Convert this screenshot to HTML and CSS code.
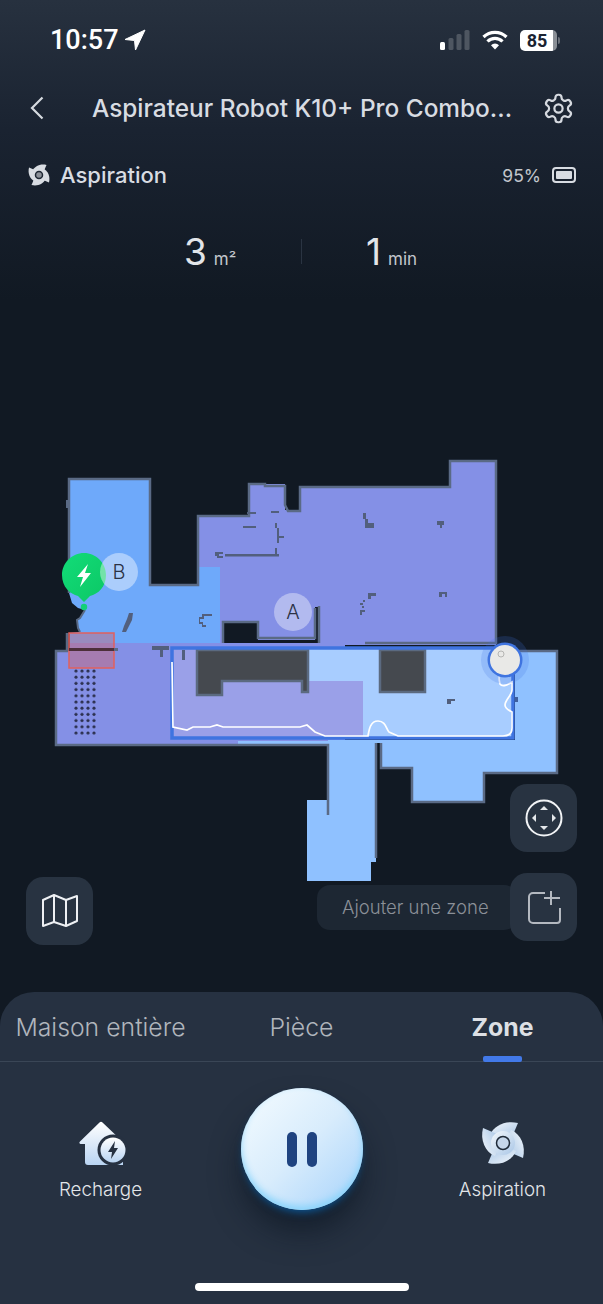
FILE: index.html
```html
<!DOCTYPE html>
<html lang="fr">
<head>
    <meta charset="UTF-8">
    <meta name="viewport" content="width=device-width, initial-scale=1.0">
    <title>Aspirateur Robot</title>
    <link rel="stylesheet" href="styles.css">
</head>
<body>
    <div class="phone">
        <div class="status-bar">
            <div class="clock">
                <span>10:57</span>
                <svg width="22" height="22" viewBox="0 0 22 22"><path d="M21 1 1 10.5l9.5 1 1 9.5z" fill="#fff" stroke="#fff" stroke-linejoin="round"/></svg>
            </div>
            <div class="status-icons">
                <svg width="30" height="20" viewBox="0 0 30 20">
                    <rect x="0" y="12" width="5" height="8" rx="1.5" fill="#fff"/>
                    <rect x="8.500" y="8" width="5" height="12" rx="1.5" fill="#4e5661"/>
                    <rect x="16.500" y="4" width="5" height="16" rx="1.5" fill="#4e5661"/>
                    <rect x="24.500" y="0" width="5" height="20" rx="1.5" fill="#4e5661"/>
                </svg>
                <svg width="26" height="20" viewBox="0 0 26 20">
                    <path d="M1.500 7a16.500 16.500 0 0 1 23 0" fill="none" stroke="#fff" stroke-width="3.200"/>
                    <path d="M5.500 11.500a10.500 10.500 0 0 1 15 0" fill="none" stroke="#fff" stroke-width="3.200"/>
                    <path d="M9 15.200a5.500 5.500 0 0 1 8 0L13 19.500z" fill="#fff"/>
                </svg>
                <div class="sys-battery"><span>85</span><i></i></div>
            </div>
        </div>

        <div class="nav-bar">
            <svg class="back" width="14" height="24" viewBox="0 0 14 24"><path d="M12.500 1.500 2 12l10.500 10.500" fill="none" stroke="#d6dae0" stroke-width="2.200"/></svg>
            <h1 class="title">Aspirateur Robot K10+ Pro Combo...</h1>
            <svg class="gear" width="33" height="33" viewBox="0 0 24 24" fill="none" stroke="#d6dae0" stroke-width="1.600">
                <path d="M12.220 2h-.44a2 2 0 0 0-2 2v.18a2 2 0 0 1-1 1.730l-.43.25a2 2 0 0 1-2 0l-.15-.08a2 2 0 0 0-2.730.73l-.22.38a2 2 0 0 0 .73 2.730l.15.1a2 2 0 0 1 1 1.720v.51a2 2 0 0 1-1 1.740l-.15.09a2 2 0 0 0-.73 2.730l.22.38a2 2 0 0 0 2.730.73l.15-.08a2 2 0 0 1 2 0l.43.25a2 2 0 0 1 1 1.730V20a2 2 0 0 0 2 2h.44a2 2 0 0 0 2-2v-.18a2 2 0 0 1 1-1.730l.43-.25a2 2 0 0 1 2 0l.15.08a2 2 0 0 0 2.730-.73l.22-.39a2 2 0 0 0-.73-2.730l-.15-.08a2 2 0 0 1-1-1.740v-.5a2 2 0 0 1 1-1.740l.15-.09a2 2 0 0 0 .73-2.730l-.22-.38a2 2 0 0 0-2.730-.73l-.15.08a2 2 0 0 1-2 0l-.43-.25a2 2 0 0 1-1-1.730V4a2 2 0 0 0-2-2z"/>
                <circle cx="12" cy="12" r="3"/>
            </svg>
        </div>

        <div class="info-row">
            <div class="mode">
                <svg width="24" height="24" viewBox="-24 -24 48 48">
                    <defs>
                        <path id="blade" d="M-13-8C-9-18 3-23 15-20L9-6H-9z"/>
                    </defs>
                    <g fill="#d8dce2">
                        <use href="#blade"/>
                        <use href="#blade" transform="rotate(90)"/>
                        <use href="#blade" transform="rotate(180)"/>
                        <use href="#blade" transform="rotate(270)"/>
                        <circle r="12"/>
                    </g>
                    <circle r="7" fill="#8b9098" stroke="#1d2633" stroke-width="3"/>
                </svg>
                <span>Aspiration</span>
            </div>
            <div class="charge">
                <span>95%</span>
                <div class="robot-battery"><i></i></div>
            </div>
        </div>

        <div class="stats">
            <div class="stat stat-area"><b>3</b><span>m²</span></div>
            <div class="stat-sep"></div>
            <div class="stat stat-time"><b>1</b><span>min</span></div>
        </div>

        <div class="map">
            <svg class="floor" width="603" height="702" viewBox="0 290 603 702">
                <defs>
                    <pattern id="dots" x="74" y="669" width="6" height="6.200" patternUnits="userSpaceOnUse">
                        <circle cx="2" cy="2" r="1.600" fill="#2c3150"/>
                    </pattern>
                    <linearGradient id="pin" x1="0" y1="0" x2="1" y2="1">
                        <stop offset="0" stop-color="#12dc78"/>
                        <stop offset="1" stop-color="#0cc765"/>
                    </linearGradient>
                </defs>

                <!-- room fills -->
                <path fill="#8490e6" d="M199 516H249V484H285V510H300V487H450V461H496V645H199z"/>
                <path fill="#8490e6" d="M56 651H70V643H345V745H56z"/>
                <path fill="#8fc1ff" d="M238 741H328V745H238zM515 651H557V773H484V802H412V768H381V743H376V847L376 862H371V881H307V800H328V740H515z"/>
                <path fill="#6ea9fa" d="M69 479H150V585H198V567H220V643H70V633L80 632 78 628 77 620 80 618 85 610 78 608 72 603 69 593z"/>

                <!-- black holes between rooms -->
                <path fill="#111923" d="M223 622H258V640H315V607H318V643H223z"/>

                <!-- selected zone -->
                <rect x="172" y="648" width="342" height="90" fill="#a8cdff"/>
                <path fill="#9aa0e8" d="M172 648H308V681H363V738H172z"/>
                <path fill="#45494f" stroke="#5b6a80" stroke-width="2.500" d="M197 650H308V692H302V681H222V695H197z"/>
                <path fill="#45494f" stroke="#5b6a80" stroke-width="2.500" d="M380 650H425V692H380z"/>

                <!-- walls -->
                <g fill="none" stroke="#5a6a85" stroke-width="2.500">
                    <path d="M69 593V479H150V585H198V516H249V484H265V486H285V505L288 511H300V487H450V461H496V643H365"/>
                    <path d="M223 643V622H258V638H315V608"/>
                    <path d="M319 606V643"/>
                    <path d="M67 633V651H56V745H328V815"/>
                    <path d="M515 651H557V773H484V802H412V768H381V743"/>
                    <path d="M376 743V858"/>
                </g>
                <path fill="none" stroke="#5a6a85" stroke-width="2" d="M85 610 80 618 77 620 78 628 80 632"/>
                <rect x="66" y="500" width="4" height="8" fill="#5a6a85"/>

                <!-- furniture and obstacle marks -->
                <g fill="#525f7d">
                    <rect x="243" y="526" width="13" height="2"/>
                    <rect x="247" y="512" width="9" height="2"/>
                    <rect x="271" y="511" width="8" height="2"/>
                    <rect x="275" y="523" width="2" height="5"/>
                    <rect x="277" y="528" width="2" height="15"/>
                    <rect x="277" y="536" width="7" height="2"/>
                    <rect x="275" y="548" width="2" height="7"/>
                    <rect x="225" y="554" width="54" height="2.500"/>
                    <path d="M215 552H223V554H219V556H223V558H217V556H215z"/>
                    <path d="M363 513H366V519H368V523H374V528H365V519H363z"/>
                    <path d="M437 521H444V525H442V528H440V525H437z"/>
                    <path d="M368 593H376V596H371V599H368z"/>
                    <rect x="363" y="600" width="2" height="2"/>
                    <rect x="360" y="603" width="3" height="2"/>
                    <rect x="362" y="606" width="2" height="2"/>
                    <path d="M360 610H365V612H362V615H360z"/>
                    <path d="M439 592H447V597H445V594H442V597H439z"/>
                    <path d="M447 699H455V701H451V704H447z"/>
                    <path d="M129 613H133L132 620 128 628 126 632H122L124 626 127 619z"/>
                    <path d="M199 617H202V614H212V616H204V619H200V622H203V625H206V627H202V624H199z"/>
                    <path d="M152 646H169V650H163V657H160V650H152z"/>
                    <path d="M182 650H185V660H182z"/>
                </g>

                <rect x="74" y="669" width="24" height="66" fill="url(#dots)"/>
                <rect x="365" y="642" width="131" height="2" fill="#5a6a85"/>

                <!-- zone outline and cleaning trail -->
                <path fill="none" stroke="#3f74e0" stroke-width="3.500" d="M172 648H513V738H172z"/>
                <rect x="515" y="697" width="3" height="5" fill="#3f5f9e"/>
                <path fill="none" stroke="#fff" stroke-width="1.700" d="M172 662 173 727 187 730 193 727 210 727 217 725 223 727H300L307 725 315 732 325 736H368C369 730 370 721 378 721 386 721 386 729 389 732L398 736H503C510 736 512 733 512 728V712C508 710 505 708 505 705 505 700 512 695 512 690V682C506 686 502 687 500 684 499 681 499 678 499 675"/>

                <!-- virtual zone box on the left -->
                <rect x="69" y="633" width="45" height="35" fill="rgba(224,92,92,.38)" stroke="#e0605e" stroke-width="1.500"/>
                <rect x="69" y="648" width="45" height="3" fill="#4d2f3a"/>
                <rect x="114" y="648" width="4" height="3" fill="#5a6a85"/>

                <!-- robot -->
                <circle cx="505" cy="660" r="24" fill="#3f74e0" fill-opacity=".2"/>
                <circle cx="505" cy="660" r="17.500" fill="#3f74e0"/>
                <circle cx="505" cy="660" r="15" fill="#e9e9e7"/>
                <circle cx="501" cy="654" r="3" fill="none" stroke="#b5b5b3" stroke-width="1"/>

                <!-- dock pin and room labels -->
                <circle cx="293" cy="612" r="19" fill="#fff" fill-opacity=".38"/>
                <text class="room-label" x="293" y="619">A</text>
                <circle cx="84" cy="607" r="3.200" fill="#12d077"/>
                <path fill="url(#pin)" d="M84 553C96 553 106 563 106 575 106 587 98 594 90 596L84 602 78 596C70 594 62 587 62 575 62 563 72 553 84 553z"/>
                <path fill="#fff" d="M88 564 77 577H83L80 587 91 573H85z"/>
                <circle cx="119" cy="572" r="19" fill="#fff" fill-opacity=".42"/>
                <text class="room-label" x="119" y="579">B</text>
            </svg>

            <div class="map-btn btn-view">
                <svg width="36" height="34" viewBox="0 0 36 34" fill="none" stroke="#eef0f3" stroke-width="2" stroke-linejoin="round">
                    <path d="M1 6 12 1 24 6 35 2V27L24 32 12 28 1 32z"/>
                    <path d="M12 1V28M24 6V32"/>
                </svg>
            </div>
            <div class="map-btn btn-center">
                <svg width="38" height="38" viewBox="0 0 38 38">
                    <circle cx="19" cy="19" r="17.500" fill="none" stroke="#f2f4f6" stroke-width="2"/>
                    <path fill="#e4e7ea" d="M19 7l4 4h-8zM19 31l4-4h-8zM7 19l4-4v8zM31 19l-4-4v8z"/>
                </svg>
            </div>
            <div class="add-zone">
                <div class="add-label">Ajouter une zone</div>
                <div class="map-btn btn-add">
                    <svg width="34" height="34" viewBox="0 0 34 34" fill="none" stroke="#b4b9c0" stroke-width="2">
                        <path d="M18 3H6a4 4 0 0 0-4 4v22a4 4 0 0 0 4 4h24a3 3 0 0 0 3-3V18"/>
                        <path d="M24 1V15M17 8H33"/>
                    </svg>
                </div>
            </div>
        </div>

        <div class="sheet">
            <div class="tabs">
                <div class="tab">Maison entière</div>
                <div class="tab">Pièce</div>
                <div class="tab active">Zone</div>
            </div>
            <div class="actions">
                <div class="action">
                    <svg width="56" height="48" viewBox="0 0 56 48">
                        <defs>
                            <linearGradient id="house" x1="0" y1="0" x2="0" y2="1">
                                <stop offset="0" stop-color="#ffffff"/>
                                <stop offset="1" stop-color="#b9d4f2"/>
                            </linearGradient>
                        </defs>
                        <path fill="url(#house)" d="M26.500 3.500Q28 2 29.500 3.500L50 23V46H15A3 3 0 0 1 12 43V25H7.500Q5.500 24 7 22.500z"/>
                        <circle cx="40" cy="31" r="15.500" fill="#263141"/>
                        <circle cx="40" cy="31" r="12.500" fill="url(#house)"/>
                        <path fill="#263141" d="M42 22 35 33H39L38 40 45 29H41z"/>
                    </svg>
                    <span>Recharge</span>
                </div>
                <div class="pause-btn">
                    <i></i><i></i>
                </div>
                <div class="action">
                    <svg width="48" height="48" viewBox="-24 -24 48 48">
                        <defs>
                            <linearGradient id="fan" x1="0" y1="0" x2="1" y2="1">
                                <stop offset="0" stop-color="#f4f8fc"/>
                                <stop offset="1" stop-color="#a9c6e6"/>
                            </linearGradient>
                        </defs>
                        <g fill="url(#fan)">
                            <use href="#blade"/>
                            <use href="#blade" transform="rotate(90)"/>
                            <use href="#blade" transform="rotate(180)"/>
                            <use href="#blade" transform="rotate(270)"/>
                            <circle r="12"/>
                        </g>
                        <circle r="6.500" fill="#c5d6ea" stroke="#1f2a38" stroke-width="1.500"/>
                    </svg>
                    <span>Aspiration</span>
                </div>
            </div>
            <div class="home-bar"></div>
        </div>
    </div>
</body>
</html>
```

FILE: styles.css
```css
* {
    box-sizing: border-box;
}
body {
    margin: 0;
    font-family: 'Inter', 'Liberation Sans', sans-serif;
    background-color: #111923;
    color: #d8dce2;
}
.phone {
    width: 603px;
    height: 1304px;
    display: flex;
    flex-direction: column;
    overflow: hidden;
    background: linear-gradient(180deg, #27313f 0, #1a2331 130px, #111923 300px);
}

/* status bar */
.status-bar {
    height: 80px;
    flex-shrink: 0;
    display: flex;
    justify-content: space-between;
    align-items: center;
    padding: 0 43px 0 50px;
}
.clock {
    display: flex;
    align-items: center;
    gap: 5px;
    font-family: 'Roboto', sans-serif;
    font-size: 27px;
    font-weight: 500;
    color: #fff;
}
.status-icons {
    display: flex;
    align-items: center;
    gap: 12px;
}
.sys-battery {
    display: flex;
    align-items: center;
    gap: 1px;
    font-family: 'Roboto', sans-serif;
}
.sys-battery span {
    width: 37px;
    height: 21px;
    padding-right: 3px;
    border-radius: 5px;
    background: linear-gradient(90deg, #fff 88%, #8a8f96 88%);
    color: #1a2331;
    font-size: 18px;
    font-weight: 700;
    line-height: 21px;
    text-align: center;
}
.sys-battery i {
    display: block;
    width: 2px;
    height: 7px;
    border-radius: 0 2px 2px 0;
    background-color: #6b717a;
}

/* header */
.nav-bar {
    height: 56px;
    flex-shrink: 0;
    display: flex;
    align-items: center;
    padding: 0 30px;
}
.back {
    flex-shrink: 0;
}
.title {
    flex: 1;
    margin: 0;
    padding-left: 18px;
    text-align: center;
    font-size: 24.4px;
    font-weight: 500;
    color: #d8dce2;
    white-space: nowrap;
}
.gear {
    flex-shrink: 0;
    margin-right: -2px;
}

.info-row {
    height: 78px;
    flex-shrink: 0;
    display: flex;
    justify-content: space-between;
    align-items: center;
    padding: 0 27px;
}
.mode {
    display: flex;
    align-items: center;
    gap: 9px;
    font-size: 22px;
    font-weight: 500;
}
.charge {
    display: flex;
    align-items: center;
    gap: 11px;
    font-size: 17.5px;
    color: #c2c6cc;
}
.robot-battery {
    width: 24px;
    height: 16px;
    border: 2px solid #d8dce2;
    border-radius: 4px;
    padding: 2px;
}
.robot-battery i {
    display: block;
    height: 100%;
    background-color: #d8dce2;
    border-radius: 1px;
}

.stats {
    height: 76px;
    flex-shrink: 0;
    display: grid;
    grid-template-columns: 301px 1px 301px;
    align-items: center;
    padding-bottom: 2px;
}
.stat {
    display: flex;
    align-items: baseline;
    gap: 7px;
}
.stat-area {
    padding-left: 184px;
}
.stat-time {
    padding-left: 64px;
}
.stat b {
    font-size: 37px;
    font-weight: 400;
    color: #e2e5e9;
}
.stat span {
    font-size: 17px;
    color: #c2c6cc;
}
.stat-sep {
    height: 25px;
    background-color: #2a3442;
}

/* map */
.map {
    position: relative;
    flex: 1;
}
.floor {
    position: absolute;
    top: 0;
    left: 0;
}
.room-label {
    font-size: 20px;
    font-weight: 300;
    text-anchor: middle;
    fill: #2b3245;
}
.map-btn {
    width: 67px;
    height: 68px;
    border-radius: 17px;
    background-color: #283341;
    display: flex;
    align-items: center;
    justify-content: center;
}
.btn-view {
    position: absolute;
    left: 26px;
    top: 587px;
}
.btn-center {
    position: absolute;
    left: 510px;
    top: 494px;
}
.add-zone {
    position: absolute;
    left: 317px;
    top: 583px;
    display: flex;
    align-items: center;
}
.add-label {
    width: 200px;
    height: 45px;
    margin-right: -7px;
    padding-left: 25px;
    border-radius: 13px;
    background-color: #1d2733;
    color: #8b9098;
    font-size: 18.5px;
    font-weight: 300;
    line-height: 45px;
}

/* bottom sheet */
.sheet {
    position: relative;
    height: 312px;
    flex-shrink: 0;
    background-color: #263141;
    border-radius: 34px 34px 0 0;
}
.tabs {
    height: 70px;
    display: grid;
    grid-template-columns: 201px 201px 201px;
    border-bottom: 1px solid #3a4656;
}
.tab {
    position: relative;
    text-align: center;
    font-size: 24.8px;
    font-weight: 300;
    line-height: 70px;
    color: #b0b5bc;
}
.tab.active {
    color: #dde0e5;
    font-weight: 700;
}
.tab.active::after {
    content: "";
    position: absolute;
    left: 81px;
    bottom: 0;
    width: 39px;
    height: 6px;
    border-radius: 2px;
    background-color: #4279e8;
}
.actions {
    display: grid;
    grid-template-columns: 201px 201px 201px;
    padding-top: 26px;
}
.action {
    display: flex;
    flex-direction: column;
    align-items: center;
    gap: 11px;
    padding-top: 31px;
    font-size: 18.8px;
    font-weight: 300;
    color: #e2e5e9;
}
.pause-btn {
    justify-self: center;
    width: 122px;
    height: 122px;
    border-radius: 50%;
    display: flex;
    justify-content: center;
    align-items: center;
    gap: 10px;
    background: linear-gradient(135deg, #f5fcff 0%, #d8ecfc 50%, #a5d2fb 100%);
    box-shadow: inset 0 -4px 7px #8ad4fb, 0 5px 8px -3px #0c5a9c, 0 22px 30px rgba(10, 20, 32, .6);
}
.pause-btn i {
    display: block;
    width: 10px;
    height: 35px;
    border-radius: 5px;
    background-color: #1f4380;
}
.home-bar {
    position: absolute;
    left: 195px;
    bottom: 13px;
    width: 214px;
    height: 8px;
    border-radius: 4px;
    background-color: #fff;
}
```
